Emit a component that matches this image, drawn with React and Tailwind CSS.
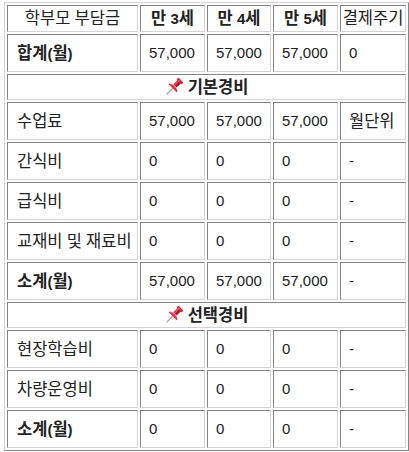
import React from "react";

function Pin() {
  return (
    <svg width="18" height="18" viewBox="0 0 16 16" className="inline-block align-[-3px] mr-[5px]">
      <g transform="rotate(45 8 8)">
        <line x1="8" y1="9" x2="8" y2="16.8" stroke="#a8a8a8" strokeWidth="1.1" strokeLinecap="round" />
        <rect x="4.8" y="-0.8" width="6.4" height="2.6" rx="1.1" fill="#e0223a" />
        <rect x="6" y="1.5" width="4" height="5.2" fill="#c40f28" />
        <path d="M3 8.7 Q8 5.6 13 8.7 L13 9.7 L3 9.7 Z" fill="#ee2f48" />
        <rect x="6.5" y="-0.3" width="1.2" height="6.8" fill="#ff7a8a" opacity="0.6" />
      </g>
    </svg>
  );
}

function K({ children }) {
  const s = String(children);
  const parts = s.split(/([\u3131-\u318E\uAC00-\uD7A3]+)/);
  return (
    <>
      {parts.map((p, i) =>
        /[\u3131-\u318E\uAC00-\uD7A3]/.test(p) ? (
          <span key={i} className="text-[16.5px]">
            {p}
          </span>
        ) : (
          <React.Fragment key={i}>{p}</React.Fragment>
        )
      )}
    </>
  );
}

const cell =
  "border border-t-[#858585] border-l-[#858585] border-b-[#d4d4d4] border-r-[#d4d4d4] px-[8px] align-middle whitespace-nowrap";

const rows = [
  { label: "수업료", v: ["57,000", "57,000", "57,000", "월단위"] },
  { label: "간식비", v: ["0", "0", "0", "-"] },
  { label: "급식비", v: ["0", "0", "0", "-"] },
  { label: "교재비 및 재료비", v: ["0", "0", "0", "-"] },
  { label: "소계(월)", v: ["57,000", "57,000", "57,000", "-"], bold: true },
];
const rows2 = [
  { label: "현장학습비", v: ["0", "0", "0", "-"] },
  { label: "차량운영비", v: ["0", "0", "0", "-"] },
  { label: "소계(월)", v: ["0", "0", "0", "-"], bold: true },
];

function DataRow({ r }) {
  return (
    <tr className="h-[38px]">
      <td className={`${cell} pl-[9px] ${r.bold ? "font-bold" : ""}`}>
        <K>{r.label}</K>
      </td>
      {r.v.map((x, i) => (
        <td key={i} className={cell}>
          <K>{x}</K>
        </td>
      ))}
    </tr>
  );
}

function Section({ title }) {
  return (
    <tr className="h-[26px]">
      <td colSpan={5} className={`${cell} text-center font-bold`}>
        <Pin />
        <K>{title}</K>
      </td>
    </tr>
  );
}

export default function App() {
  return (
    <div className="w-[409px] h-[452px] bg-white pt-[2px] pl-[4px] overflow-hidden">
      <table
        className="table-fixed border-separate border-spacing-[2px] border border-t-[#d4d4d4] border-l-[#d4d4d4] border-b-[#858585] border-r-[#858585] w-[405px] text-[15px] leading-[18px] text-[#222]"
        style={{ fontFamily: '"Liberation Sans", "Noto Sans CJK KR", sans-serif' }}
      >
        <colgroup>
          <col className="w-[131px]" />
          <col className="w-[65px]" />
          <col className="w-[64px]" />
          <col className="w-[65px]" />
          <col className="w-[66px]" />
        </colgroup>
        <tbody>
          <tr className="h-[27px]">
            <td className={`${cell} text-center`}>
              <K>학부모 부담금</K>
            </td>
            <td className={`${cell} text-center font-bold`}>
              <K>만 3세</K>
            </td>
            <td className={`${cell} text-center font-bold`}>
              <K>만 4세</K>
            </td>
            <td className={`${cell} text-center font-bold`}>
              <K>만 5세</K>
            </td>
            <td className={`${cell} text-center !px-0 overflow-visible`}>
              <K>결제주기</K>
            </td>
          </tr>
          <tr className="h-[38px]">
            <td className={`${cell} pl-[9px] font-bold`}>
              <K>합계(월)</K>
            </td>
            <td className={cell}>57,000</td>
            <td className={cell}>57,000</td>
            <td className={cell}>57,000</td>
            <td className={cell}>0</td>
          </tr>
          <Section title="기본경비" />
          {rows.map((r, i) => (
            <DataRow key={i} r={r} />
          ))}
          <Section title="선택경비" />
          {rows2.map((r, i) => (
            <DataRow key={i} r={r} />
          ))}
        </tbody>
      </table>
    </div>
  );
}
